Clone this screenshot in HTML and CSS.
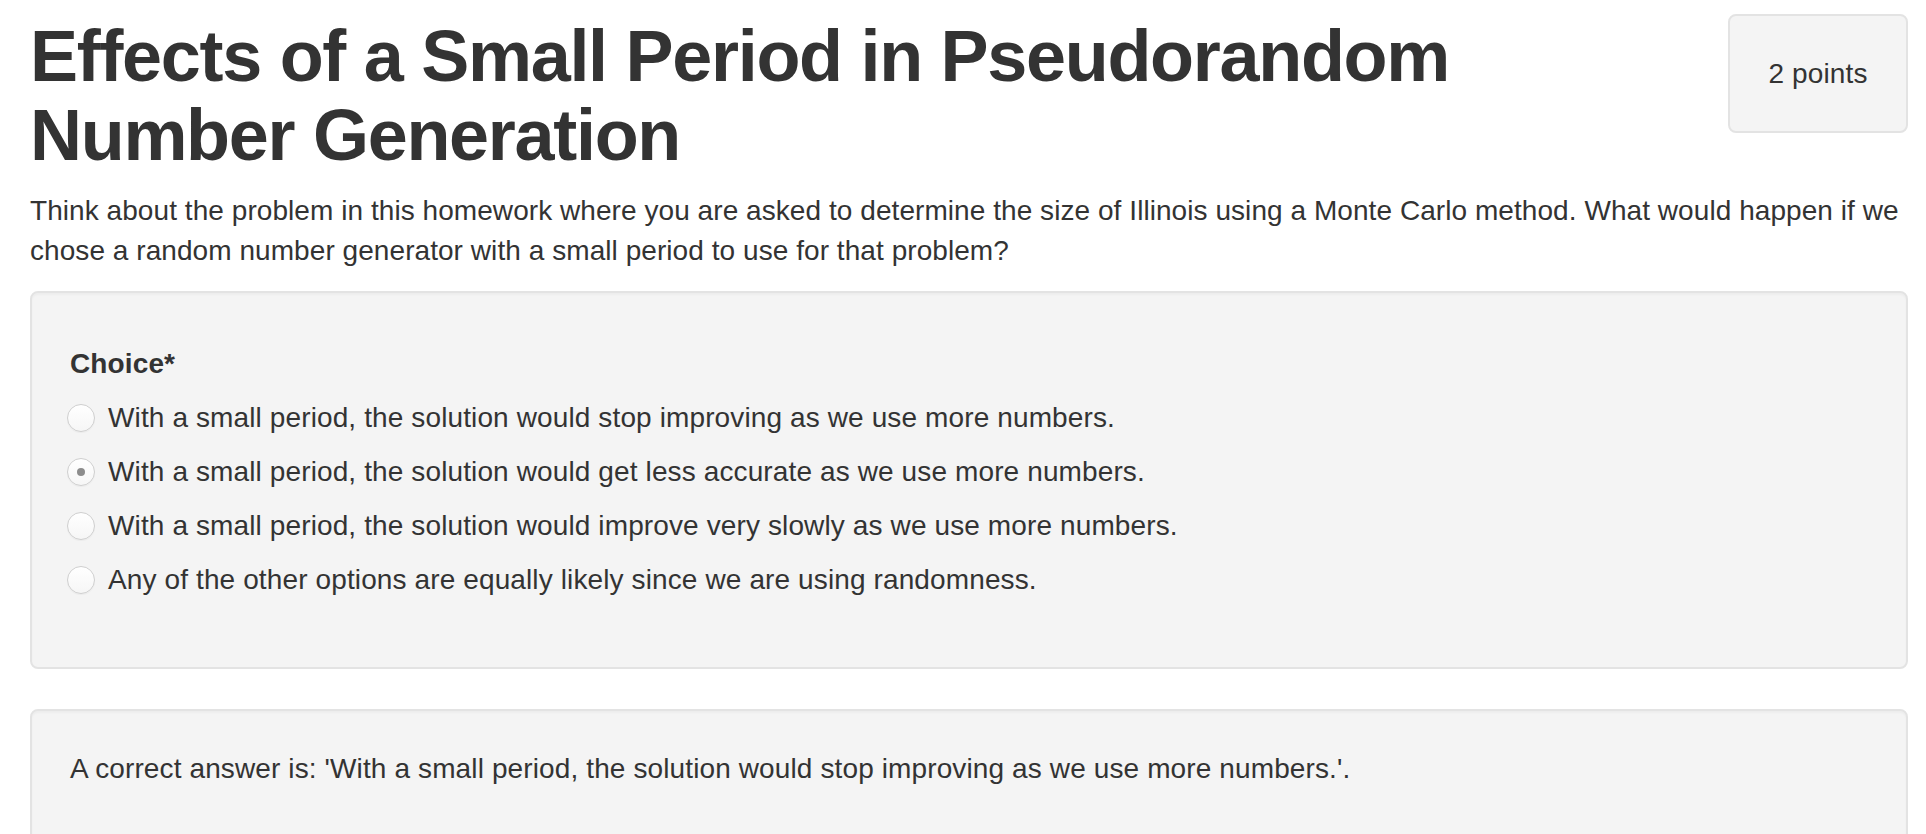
FILE: index.html
```html
<!DOCTYPE html>
<html lang="en">
<head>
<meta charset="utf-8">
<title>Effects of a Small Period in Pseudorandom Number Generation</title>
<link rel="stylesheet" href="styles.css">
</head>
<body>
<div class="page">
  <div class="header">
    <h1 class="title">Effects of a Small Period in Pseudorandom Number Generation</h1>
    <div class="points">2 points</div>
  </div>
  <p class="prompt">Think about the problem in this homework where you are asked to determine the size of Illinois using a Monte Carlo method. What would happen if we chose a random number generator with a small period to use for that problem?</p>
  <div class="well">
    <div class="form-group">
      <div class="label">Choice*</div>
      <div class="options">
        <label class="option"><span class="radio"></span><span>With a small period, the solution would stop improving as we use more numbers.</span></label>
        <label class="option"><span class="radio checked"></span><span>With a small period, the solution would get less accurate as we use more numbers.</span></label>
        <label class="option"><span class="radio"></span><span>With a small period, the solution would improve very slowly as we use more numbers.</span></label>
        <label class="option"><span class="radio"></span><span>Any of the other options are equally likely since we are using randomness.</span></label>
      </div>
    </div>
  </div>
  <div class="well answer">
    <p class="answer-text">A correct answer is: 'With a small period, the solution would stop improving as we use more numbers.'.</p>
  </div>
</div>
</body>
</html>
```

FILE: styles.css
```css
html, body {
  margin: 0;
  padding: 0;
  background: #ffffff;
}

body {
  font-family: "Liberation Sans", Arial, Helvetica, sans-serif;
  font-size: 28px;
  line-height: 40px;
  letter-spacing: 0.12px;
  color: #333333;
}

.page {
  padding: 0 18px 0 30px;
}

.header {
  display: flex;
  align-items: flex-start;
  justify-content: space-between;
}

.title {
  margin: 17px 0 0 0;
  font-size: 72px;
  font-weight: bold;
  letter-spacing: -1.3px;
  line-height: 79px;
  color: #333333;
  max-width: 1500px;
}

.points {
  flex: none;
  margin-top: 14px;
  width: 176px;
  height: 115px;
  display: flex;
  align-items: center;
  justify-content: center;
  background: #f4f4f4;
  border: 2px solid #e3e3e3;
  border-radius: 8px;
  font-size: 28px;
}

.prompt {
  margin: 16px 0 20px 0;
  letter-spacing: 0.06px;
}

.well {
  background: #f4f4f4;
  border: 2px solid #e3e3e3;
  border-radius: 8px;
  box-shadow: inset 0 2px 2px rgba(0, 0, 0, 0.03);
  padding: 38px 38px 38px 38px;
  margin-bottom: 40px;
}

.form-group {
  padding-top: 13px;
  padding-bottom: 29px;
}

.label {
  font-weight: bold;
}

.options {
  margin-top: 14px;
  display: flex;
  flex-direction: column;
  gap: 14px;
}

.option {
  display: flex;
  align-items: center;
  gap: 13px;
  margin-left: -3px;
}

.radio {
  flex: none;
  width: 26px;
  height: 26px;
  border-radius: 50%;
  border: 1px solid #cfcfcf;
  background: linear-gradient(#ffffff, #f6f6f6);
  box-shadow: 0 1px 1px rgba(0, 0, 0, 0.04);
  display: flex;
  align-items: center;
  justify-content: center;
}

.radio.checked::after {
  content: "";
  width: 8px;
  height: 8px;
  border-radius: 50%;
  background: #8c8c8c;
}

.answer {
  padding-bottom: 60px;
}

.answer-text {
  margin: 0;
}
```
